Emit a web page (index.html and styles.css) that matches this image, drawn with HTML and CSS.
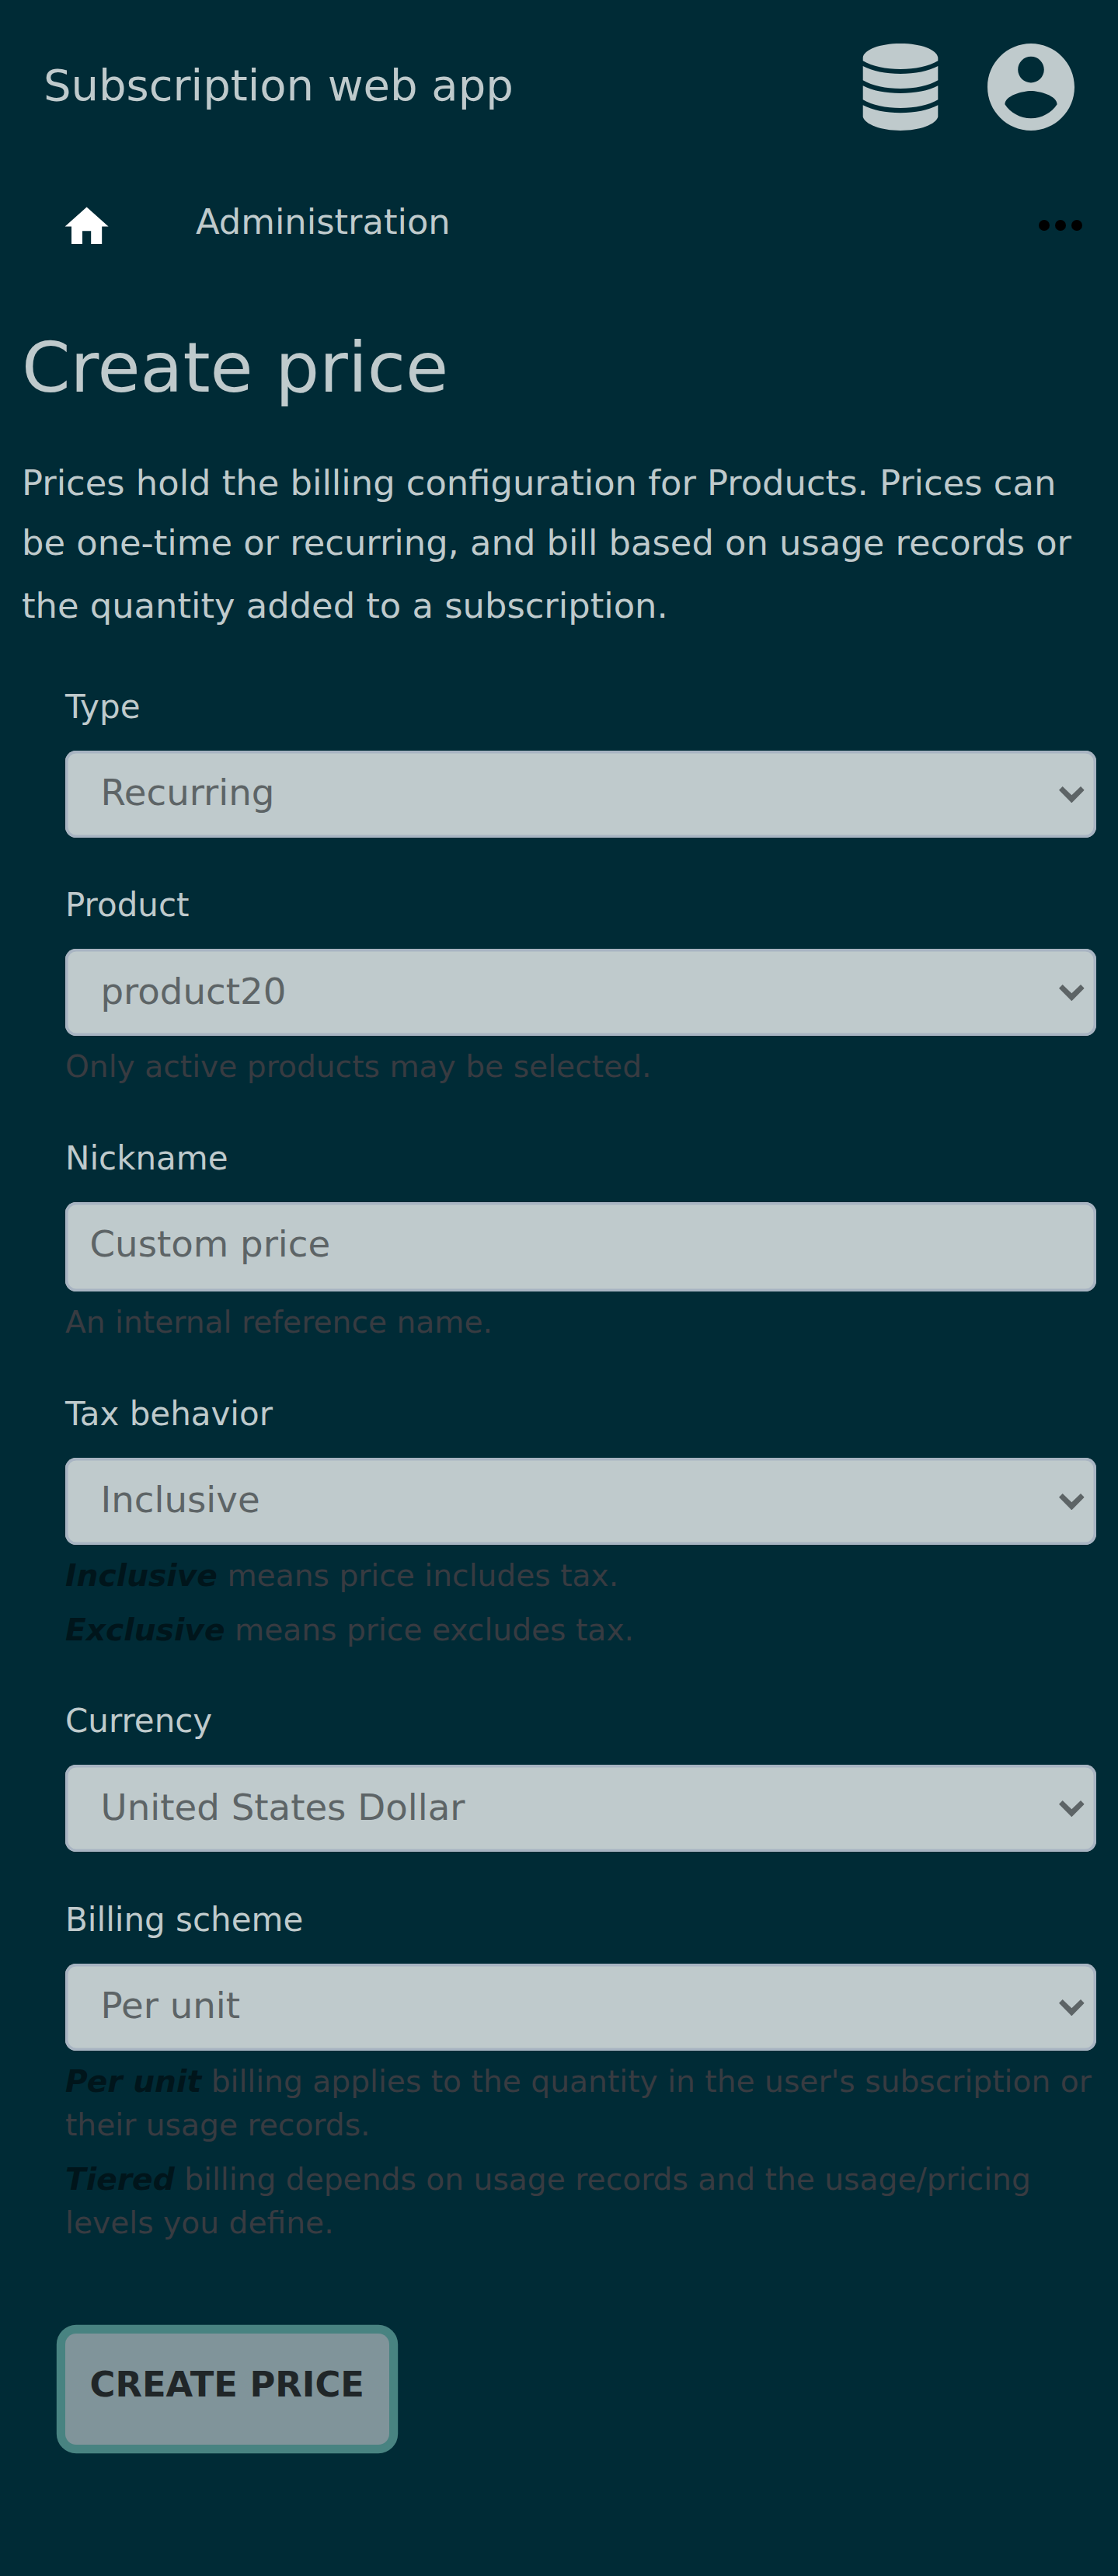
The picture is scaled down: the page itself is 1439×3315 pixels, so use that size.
FILE: index.html
```html
<!DOCTYPE html>
<html lang="en">
<head>
<meta charset="utf-8">
<title>Create price</title>
<link rel="stylesheet" href="styles.css">
</head>
<body>
<svg class="defs" aria-hidden="true"><symbol id="chevron" viewBox="0 0 98 64"><path d="M14 0 49 34 84 0 98 14 49 64 0 14z"/></symbol></svg>
<header class="header">
  <h1 class="app-title">Subscription web app</h1>
  <svg class="header-icon" viewBox="0 0 112 112"><path d="M7.700 18C9 8 29 0 56 0s47 8 48.300 18v4.300C92 29.500 75 33 56 33S20 29.500 7.700 22.300zM7.700 29C20 35.500 37 39 56 39s36-3.500 48.300-10v18.300C92 54.500 75 58 56 58S20 54.500 7.700 47.300zM7.700 54.300C20 60.800 37 64 56 64s36-3.200 48.300-9.700V72.300C92 79.500 75 83 56 83S20 79.500 7.700 72.300zM7.700 79.300C20 85.800 37 89.300 56 89.300s36-3.500 48.300-10v15C102 104 81 112 56 112S10 104 7.700 94.300z"/></svg>
  <svg class="header-icon" viewBox="2 2 20 20"><path d="M12 2C6.480 2 2 6.480 2 12s4.480 10 10 10 10-4.480 10-10S17.520 2 12 2zm0 3c1.660 0 3 1.340 3 3s-1.340 3-3 3-3-1.340-3-3 1.340-3 3-3zm0 14.200c-2.500 0-4.710-1.280-6-3.220.030-1.990 4-3.080 6-3.080 1.990 0 5.970 1.090 6 3.080-1.290 1.940-3.500 3.220-6 3.220z"/></svg>
</header>
<nav class="nav">
  <svg class="nav-home" viewBox="0 0 24 24"><path d="M10 20v-6h4v6h5v-8h3L12 3 2 12h3v8z"/></svg>
  <a class="nav-link">Administration</a>
  <svg class="nav-more" viewBox="0 0 56 14"><circle cx="7" cy="7" r="7"/><circle cx="28" cy="7" r="7"/><circle cx="49" cy="7" r="7"/></svg>
</nav>
<main class="main">
  <h2 class="heading">Create price</h2>
  <p class="intro"><span class="line">Prices hold the billing configuration for Products. Prices can</span> <span class="line">be one-time or recurring, and bill based on usage records or</span> <span class="line line-last">the quantity added to a subscription.</span></p>
  <form class="form">
    <div class="field">
      <label class="label" for="type">Type</label>
      <div class="select"><select class="control" id="type"><option>Recurring</option></select><svg class="chevron"><use href="#chevron"/></svg></div>
    </div>
    <div class="field">
      <label class="label" for="product">Product</label>
      <div class="select"><select class="control" id="product"><option>product20</option></select><svg class="chevron"><use href="#chevron"/></svg></div>
      <div class="help"><p>Only active products may be selected.</p></div>
    </div>
    <div class="field">
      <label class="label" for="nickname">Nickname</label>
      <input class="control control-input" id="nickname" value="Custom price">
      <div class="help"><p>An internal reference name.</p></div>
    </div>
    <div class="field">
      <label class="label" for="tax">Tax behavior</label>
      <div class="select"><select class="control" id="tax"><option>Inclusive</option></select><svg class="chevron"><use href="#chevron"/></svg></div>
      <div class="help"><p><em>Inclusive</em> means price includes tax.</p><p><em>Exclusive</em> means price excludes tax.</p></div>
    </div>
    <div class="field">
      <label class="label" for="currency">Currency</label>
      <div class="select"><select class="control" id="currency"><option>United States Dollar</option></select><svg class="chevron"><use href="#chevron"/></svg></div>
    </div>
    <div class="field">
      <label class="label" for="scheme">Billing scheme</label>
      <div class="select"><select class="control" id="scheme"><option>Per unit</option></select><svg class="chevron"><use href="#chevron"/></svg></div>
      <div class="help"><p><em>Per unit</em> billing applies to the quantity in the user's subscription or their usage records.</p><p><em>Tiered</em> billing depends on usage records and the usage/pricing levels you define.</p></div>
    </div>
    <button class="submit" type="button">CREATE PRICE</button>
  </form>
</main>
</body>
</html>
```
FILE: styles.css
```css
* { box-sizing: border-box; }
body {
  margin: 0;
  min-height: 3315px;
  background: #002b36;
  color: #bfcacc;
  font-family: "DejaVu Sans", sans-serif;
  font-size: 44.8px;
}
h1, h2, p { margin: 0; font-weight: 400; }
.defs { display: none; }
.header {
  display: flex;
  align-items: center;
  gap: 56px;
  height: 224px;
  padding: 0 56px;
}
.app-title { flex: 1; font-size: 56px; line-height: 64px; padding-bottom: 5px; }
.header-icon { width: 112px; height: 112px; fill: #bfcacc; }
.nav {
  display: flex;
  align-items: flex-start;
  height: 193px;
  padding: 34px 46px 0 78.4px;
}
.nav-home { width: 67.2px; height: 67.2px; fill: #fff; }
.nav-link { margin-left: 106.4px; line-height: 56px; }
.nav-more { width: 56px; height: 14px; margin: 25.3px 0 0 auto; }
.main { padding: 0 28px; }
.heading { font-size: 89.6px; line-height: 112px; }
.intro { padding-top: 54px; }
.line { display: block; line-height: 77px; white-space: nowrap; }
.line-last { line-height: 85px; }
.form { padding: 0 0 0 56px; }
.field { padding-top: 59.5px; }
.label { display: block; margin-bottom: 28px; font-size: 42px; line-height: 56px; }
.select { position: relative; }
.control {
  display: block;
  width: 100%;
  height: 112px;
  margin: 0;
  padding: 0 45.5px 3px;
  border: 0;
  border-radius: 14px;
  background: #bfcacc;
  box-shadow: inset 0 0 0 3.5px #a8b4c2;
  color: #5d6466;
  font: 46.667px "DejaVu Sans", sans-serif;
  appearance: none;
  outline: none;
}
.control-input { height: 115.5px; padding: 0 31.5px 6px; }
.chevron {
  position: absolute;
  top: 46.3px;
  right: 15.5px;
  width: 32.7px;
  height: 21.4px;
  fill: #5d6466;
}
.help { padding: 12px 0 2px; color: #383b41; font-size: 39.2px; line-height: 56px; }
.help p + p { margin-top: 14px; }
.help em { color: #00151b; font-weight: 700; }
.submit {
  display: block;
  width: 416.5px;
  height: 143.5px;
  margin-top: 112px;
  padding: 0 0 11px;
  border: 0;
  border-radius: 14px;
  background: #80949a;
  box-shadow: 0 0 0 11.2px #488381;
  color: #202628;
  font: 700 44.8px "DejaVu Sans", sans-serif;
}
```
